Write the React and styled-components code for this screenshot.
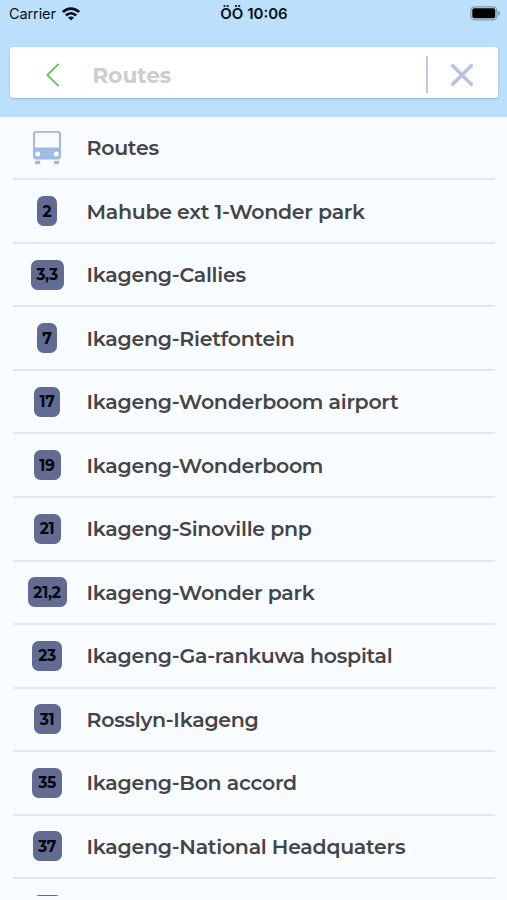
import styled, { createGlobalStyle } from "styled-components";

const routes = [
    { number: "2", name: "Mahube ext 1-Wonder park", badge: 20 },
    { number: "3,3", name: "Ikageng-Callies", badge: 33 },
    { number: "7", name: "Ikageng-Rietfontein", badge: 20 },
    { number: "17", name: "Ikageng-Wonderboom airport", badge: 26 },
    { number: "19", name: "Ikageng-Wonderboom", badge: 27 },
    { number: "21", name: "Ikageng-Sinoville pnp", badge: 27 },
    { number: "21,2", name: "Ikageng-Wonder park", badge: 39 },
    { number: "23", name: "Ikageng-Ga-rankuwa hospital", badge: 30 },
    { number: "31", name: "Rosslyn-Ikageng", badge: 27 },
    { number: "35", name: "Ikageng-Bon accord", badge: 30 },
    { number: "37", name: "Ikageng-National Headquaters", badge: 29 },
    { number: "", name: "", badge: 29 },
];

const WifiIcon = () => (
    <svg width="18" height="14" viewBox="0 0 18 14">
        <g fill="none" stroke="#07101a" strokeWidth="2.7">
            <path d="M0.9 5.1C5.4 0.4 12.6 0.4 17.1 5.1" />
            <path d="M3.9 8.5C6.8 5.5 11.2 5.5 14.1 8.5" />
        </g>
        <path d="M9 13.4L6 10.5C7.7 9 10.3 9 12 10.5Z" fill="#07101a" />
    </svg>
);

const BatteryIcon = () => (
    <svg width="31" height="15" viewBox="0 0 31 15">
        <rect x="0.8" y="0.8" width="26" height="13" rx="3.8" fill="none" stroke="#819bb0" strokeWidth="1.3" />
        <rect x="2.3" y="2.3" width="23" height="10" rx="2" fill="#000" />
        <path d="M28 4.8C30.7 5.9 30.7 8.7 28 9.8Z" fill="#819bb0" />
    </svg>
);

const BackIcon = () => (
    <svg width="14" height="26" viewBox="0 0 14 26">
        <path d="M12.7 1.8L1.2 13L12.7 24.2" fill="none" stroke="#63bd61" strokeWidth="1.8" />
    </svg>
);

const CloseIcon = () => (
    <svg width="24" height="24" viewBox="0 0 24 24">
        <path d="M2.7 2.7L21.3 21.3M21.3 2.7L2.7 21.3" fill="none" stroke="#b9c3e0" strokeWidth="3.6" strokeLinecap="round" />
    </svg>
);

const BusIcon = () => (
    <svg width="30" height="35" viewBox="0 0 30 35">
        <path
            fill="#9fbbe2"
            fillRule="evenodd"
            d="M4 1H26Q29 1 29 4V26Q29 29.5 26 29.5H4Q1 29.5 1 26V4Q1 1 4 1ZM4.5 2.8Q3 2.8 3 4.3V17.5H27V4.3Q27 2.8 25.5 2.8ZM5.7 21.5A2.5 2.5 0 1 0 5.7 26.5A2.5 2.5 0 1 0 5.7 21.5ZM24.3 21.5A2.5 2.5 0 1 0 24.3 26.5A2.5 2.5 0 1 0 24.3 21.5Z"
        />
        <rect x="3" y="30.8" width="5.2" height="3.5" rx="1" fill="#9fbbe2" />
        <rect x="22" y="30.8" width="5.2" height="3.5" rx="1" fill="#9fbbe2" />
    </svg>
);

const App = () => {
    return <Screen>
        <GlobalStyle />
        <Header>
            <StatusBar>
                <Carrier>Carrier <WifiIcon /></Carrier>
                <Clock>ÖÖ 10:06</Clock>
                <Battery><BatteryIcon /></Battery>
            </StatusBar>
            <SearchBar>
                <BackButton aria-label="Back"><BackIcon /></BackButton>
                <SearchText>Routes</SearchText>
                <CloseButton aria-label="Close"><CloseIcon /></CloseButton>
            </SearchBar>
        </Header>
        <RouteList>
            <Row>
                <IconCell><BusIcon /></IconCell>
                <RouteName>Routes</RouteName>
            </Row>
            {
                routes.map((route) => (
                    <Row key={route.number}>
                        <IconCell><Badge $width={route.badge}>{route.number}</Badge></IconCell>
                        <RouteName>{route.name}</RouteName>
                    </Row>
                ))
            }
        </RouteList>
    </Screen>
}

const GlobalStyle = createGlobalStyle`
    *{
        box-sizing:border-box;
    }
    body{
        margin:0;
        background:#f9fcff;
    }
`;
const Screen = styled.main`
    height:900px;
    overflow:hidden;
    background:#f9fcff;
    font-family:Montserrat, Inter, "Liberation Sans", sans-serif;
`;
const Header = styled.header`
    height:116.7px;
    background:#bce0fb;
`;
const StatusBar = styled.div`
    display:grid;
    grid-template-columns:1fr auto 1fr;
    align-items:center;
    height:27px;
    padding:0 6px 0 9px;
    color:#07101a;
    font-family:Inter, "Liberation Sans", sans-serif;
    font-size:14.5px;
`;
const Carrier = styled.div`
    display:flex;
    align-items:center;
    gap:6px;
    letter-spacing:-0.1px;
`;
const Clock = styled.div`
    padding-right:2px;
    font-size:15px;
    font-weight:600;
`;
const Battery = styled.div`
    display:flex;
    justify-content:flex-end;
`;
const SearchBar = styled.div`
    display:flex;
    align-items:center;
    height:51px;
    margin:20px 9px 0 10px;
    padding-top:4px;
    border-radius:3px;
    background:#fff;
    box-shadow:0 1px 2px rgba(80, 110, 150, 0.4);
`;
const IconButton = styled.button`
    display:flex;
    align-items:center;
    justify-content:center;
    padding:0;
    border:none;
    background:none;
`;
const BackButton = styled(IconButton)`
    width:82.5px;
    padding-left:4px;
`;
const SearchText = styled.div`
    flex:1;
    color:#cdcdcd;
    font-size:21.5px;
    font-weight:700;
`;
const CloseButton = styled(IconButton)`
    width:72px;
    height:37px;
    padding-right:3px;
    border-left:2px solid #c3c9e5;
`;
const RouteList = styled.div`
    height:779.6px;
    overflow:hidden;
    padding:0 12px 0 13px;
`;
const Row = styled.div`
    display:flex;
    align-items:center;
    height:63.55px;
    border-bottom:2px solid #e2e6f8;
`;
const IconCell = styled.div`
    display:flex;
    justify-content:center;
    width:68px;
    margin-right:5.5px;
`;
const Badge = styled.span`
    display:flex;
    align-items:center;
    justify-content:center;
    width:${({ $width }) => $width}px;
    height:30px;
    border-radius:6.5px;
    background:#626b92;
    color:#05070d;
    font-size:15.5px;
    font-weight:700;
    letter-spacing:-0.3px;
`;
const RouteName = styled.div`
    color:#444548;
    font-size:20.5px;
    font-weight:600;
    letter-spacing:-0.27px;
    white-space:nowrap;
`;
export default App;
